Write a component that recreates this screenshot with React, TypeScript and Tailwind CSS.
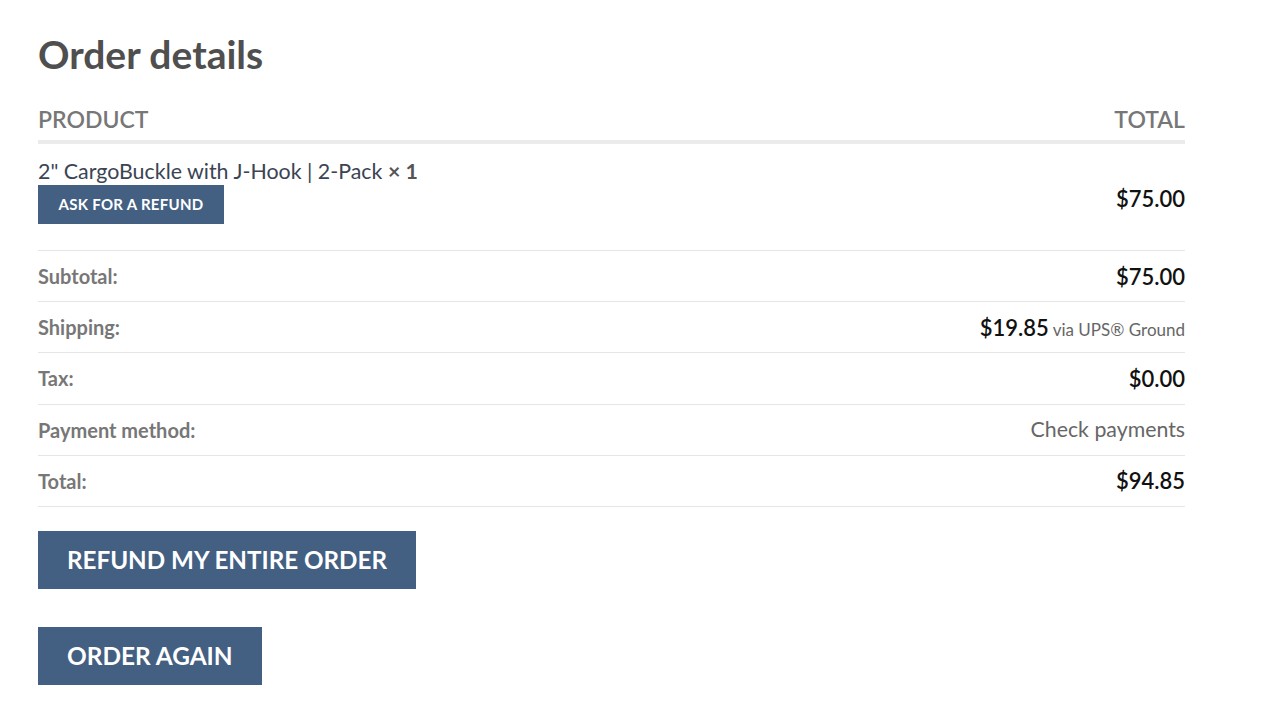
export default function App() {
  const rows = [
    { label: "Subtotal:", value: <span className="text-[22px] font-semibold text-[#111]">$75.00</span> },
    {
      label: "Shipping:",
      value: (
        <span>
          <span className="text-[22px] font-semibold text-[#111]">$19.85</span>
          <span className="text-[17px] text-[#666]"> via UPS® Ground</span>
        </span>
      ),
    },
    { label: "Tax:", value: <span className="text-[22px] font-semibold text-[#111]">$0.00</span> },
    { label: "Payment method:", value: <span className="text-[21.3px] text-[#666]">Check payments</span> },
    { label: "Total:", value: <span className="text-[22px] font-semibold text-[#111]">$94.85</span> },
  ];

  return (
    <div className="min-h-screen bg-white font-['Lato','Liberation_Sans',sans-serif]">
      <div className="ml-[38px] w-[1147px] pt-[31px]">
        <h2 className="text-[39px] font-bold leading-[46px] text-[#4f4f4f]">Order details</h2>

        <div className="mt-[28px] flex items-end justify-between border-b-4 border-[#ebebeb] pb-[7px] text-[23px] font-semibold uppercase leading-[28px] text-[#777]">
          <span>Product</span>
          <span>Total</span>
        </div>

        <div className="flex items-center justify-between border-b border-[#e6e6e6] pt-[14px] pb-[26px]">
          <div>
            <div className="text-[21.4px] leading-[26px] text-[#3a4452]">
              2" CargoBuckle with J-Hook | 2-Pack <strong className="font-bold text-[#555]">× 1</strong>
            </div>
            <button className="mt-[1px] h-[39px] w-[186px] bg-[#435f82] text-[15px] font-bold uppercase tracking-[0.3px] text-white">
              Ask for a refund
            </button>
          </div>
          <span className="mt-[14px] text-[22px] font-semibold text-[#111]">$75.00</span>
        </div>

        {rows.map((r) => (
          <div
            key={r.label}
            className="flex h-[51.2px] items-center justify-between border-b border-[#e6e6e6]"
          >
            <span className="text-[20px] font-bold text-[#777]">{r.label}</span>
            {r.value}
          </div>
        ))}

        <div className="mt-[24px] flex flex-col items-start gap-[38px]">
          <button className="h-[58px] bg-[#435f82] px-[29px] text-[24.2px] font-bold uppercase text-white">
            Refund my entire order
          </button>
          <button className="h-[58px] bg-[#435f82] px-[29px] text-[24.4px] font-bold uppercase text-white">
            Order again
          </button>
        </div>
      </div>
    </div>
  );
}
